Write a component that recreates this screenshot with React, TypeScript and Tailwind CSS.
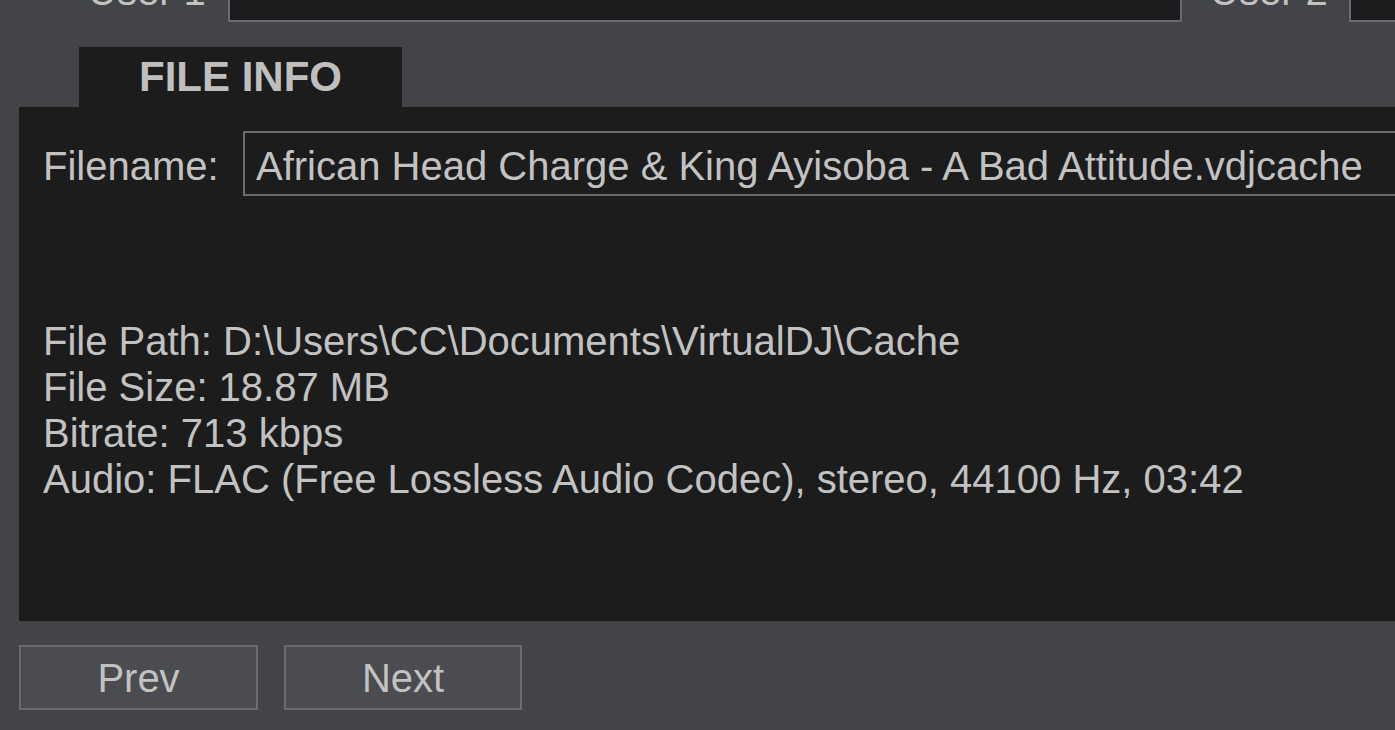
export default function App() {
  const info = [
    'File Path: D:\\Users\\CC\\Documents\\VirtualDJ\\Cache',
    'File Size: 18.87 MB',
    'Bitrate: 713 kbps',
    'Audio: FLAC (Free Lossless Audio Codec), stereo, 44100 Hz, 03:42',
  ]

  return (
    <div
      className="w-[1395px] h-[730px] overflow-hidden bg-[#434448] text-[#c2c2c2] text-[40px] leading-[46px]"
      style={{ fontFamily: '"Liberation Sans", Arial, sans-serif' }}
    >
      {/* User fields row (scrolled off the top) */}
      <div className="flex items-end h-[22px] whitespace-nowrap">
        <div className="ml-[88px] w-[140px] mb-[8px]">User 1</div>
        <div className="w-[954px] h-[60px] bg-[#1c1c1e] border-2 border-[#6b6b6f]"></div>
        <div className="ml-[28px] w-[139px] mb-[8px]">User 2</div>
        <div className="flex-1 h-[60px] bg-[#1c1c1e] border-2 border-r-0 border-[#6b6b6f]"></div>
      </div>

      {/* Tab */}
      <div className="mt-[25px] ml-[79px] w-[323px] h-[60px] bg-[#1c1c1d] flex items-center justify-center font-bold text-[42px] leading-[60px] text-[#bfbfbf]">
        FILE INFO
      </div>

      {/* Panel */}
      <div className="ml-[19px] h-[514px] bg-[#1c1c1d] pt-[24px] pl-[24px]">
        <div className="flex items-start whitespace-nowrap">
          <div className="w-[200px] mt-[12px]">Filename:</div>
          <div className="flex-1 h-[65px] border-2 border-r-0 border-[#6b6b6f] pl-[11px] pt-[10px] overflow-hidden">
            African Head Charge &amp; King Ayisoba - A Bad Attitude.vdjcache
          </div>
        </div>
        <div className="mt-[122px] whitespace-nowrap">
          {info.map((line) => (
            <div key={line}>{line}</div>
          ))}
        </div>
      </div>

      {/* Buttons */}
      <div className="flex gap-[26px] ml-[19px] mt-[24px]">
        <button className="w-[239px] h-[65px] bg-[#4b4c50] border-2 border-[#69696e] text-[#c2c2c2] flex items-center justify-center">
          Prev
        </button>
        <button className="w-[238px] h-[65px] bg-[#4b4c50] border-2 border-[#69696e] text-[#c2c2c2] flex items-center justify-center">
          Next
        </button>
      </div>
    </div>
  )
}
